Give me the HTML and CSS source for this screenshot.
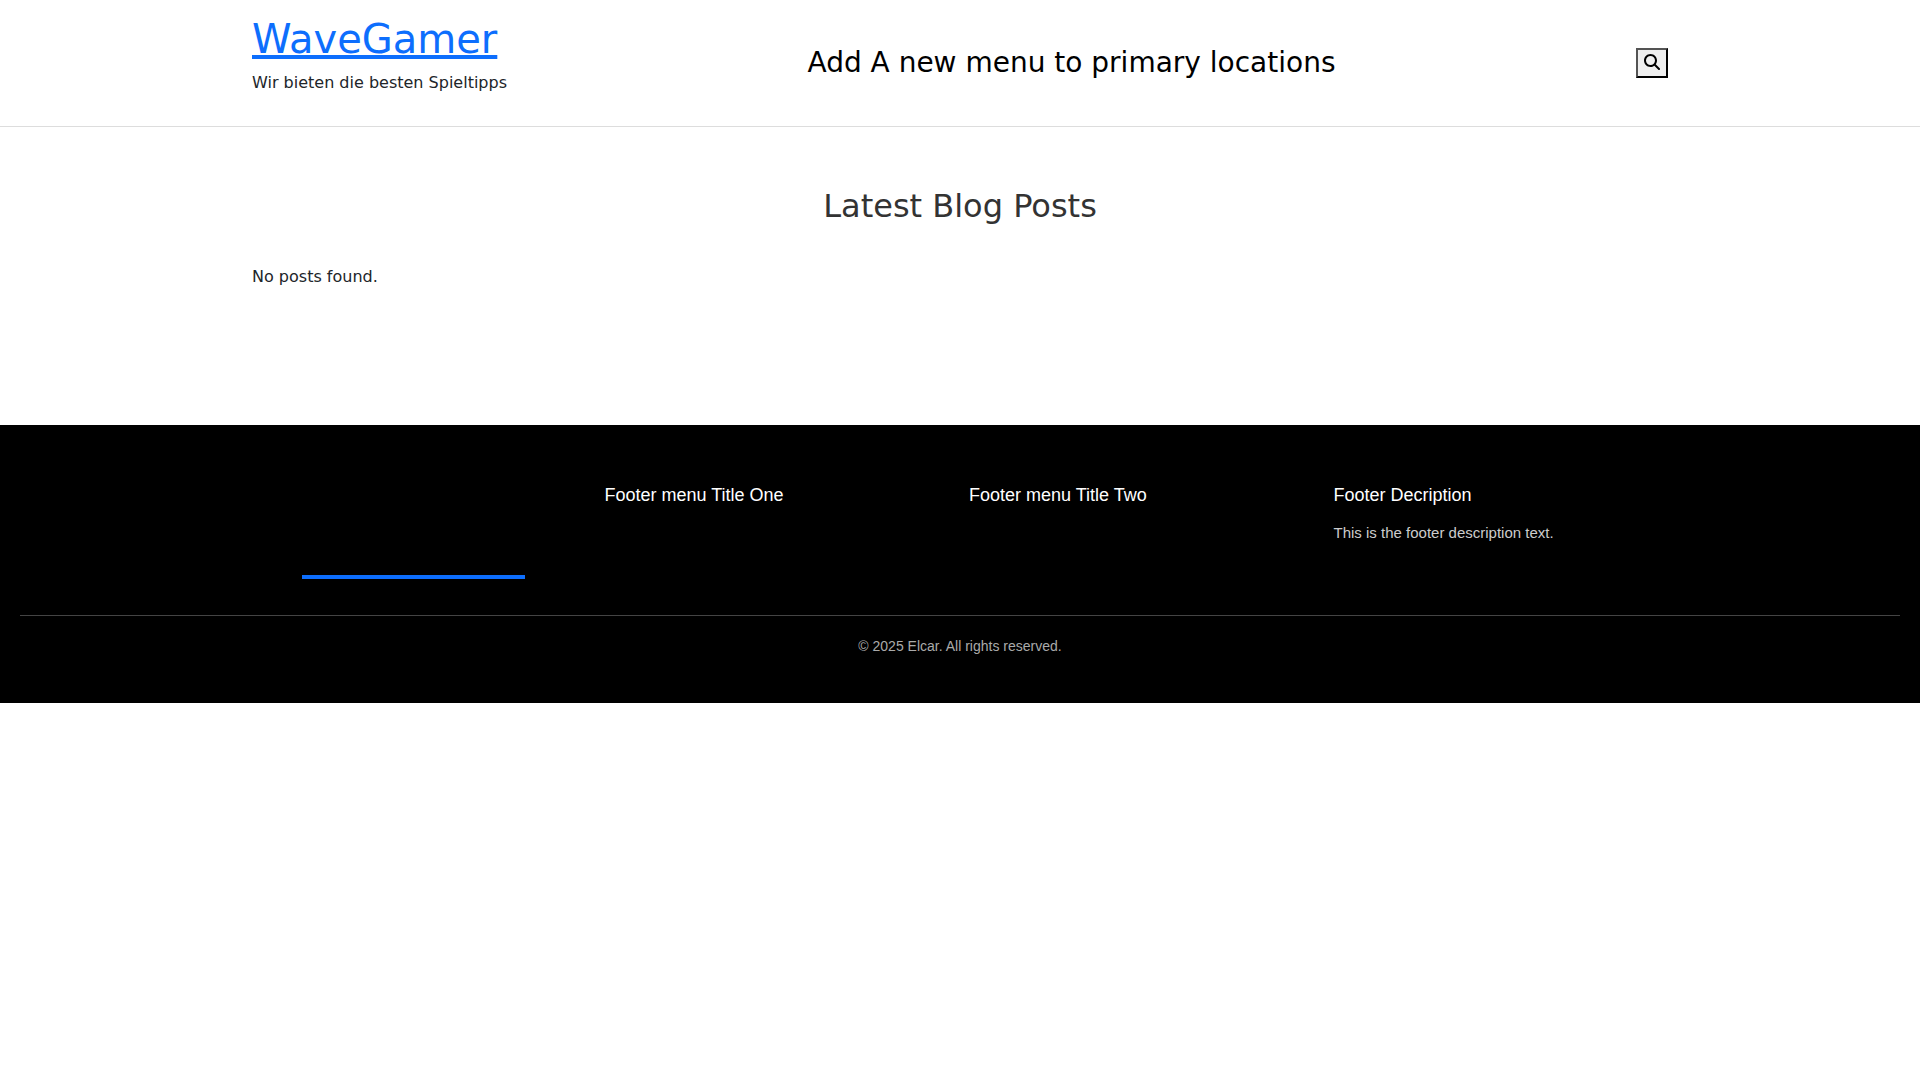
FILE: index.html
```html
<!DOCTYPE html>
<html lang="de">
<head>
    <meta charset="UTF-8">
    <meta name="viewport" content="width=device-width, initial-scale=1.0">
    <title>WaveGamer</title>
    <link rel="stylesheet" href="styles.css">
</head>
<body>
    <header class="site-header">
        <div class="container header-inner">
            <div class="site-logo">
                <h1><a href="#">WaveGamer</a></h1>
                <p>Wir bieten die besten Spieltipps</p>
            </div>
            <nav class="main-nav">
                <h3>Add A new menu to primary locations</h3>
            </nav>
            <button class="search-toggle" type="button" aria-label="Search">
                <svg viewBox="0 0 512 512" aria-hidden="true"><path d="M416 208c0 45.9-14.9 88.3-40 122.7L502.6 457.4c12.5 12.5 12.5 32.8 0 45.3s-32.8 12.5-45.3 0L330.7 376c-34.4 25.2-76.8 40-122.7 40C93.1 416 0 322.9 0 208S93.1 0 208 0S416 93.1 416 208zM208 352a144 144 0 1 0 0-288 144 144 0 1 0 0 288z"/></svg>
            </button>
        </div>
    </header>

    <main class="blog-section">
        <div class="container">
            <h2>Latest Blog Posts</h2>
            <p>No posts found.</p>
        </div>
    </main>

    <footer class="site-footer">
        <div class="footer-grid">
            <div class="footer-col">
                <a class="footer-logo" href="#" aria-label="WaveGamer"></a>
            </div>
            <div class="footer-col">
                <h4>Footer menu Title One</h4>
            </div>
            <div class="footer-col">
                <h4>Footer menu Title Two</h4>
            </div>
            <div class="footer-col">
                <h4>Footer Decription</h4>
                <p>This is the footer description text.</p>
            </div>
        </div>
        <div class="footer-bottom">
            <p>© 2025 Elcar. All rights reserved.</p>
        </div>
    </footer>
</body>
</html>
```
FILE: styles.css
```css
* {
    box-sizing: border-box;
}

body {
    margin: 0;
    background: #fff;
    color: #212529;
    font-family: "DejaVu Sans", sans-serif;
    font-size: 16px;
    line-height: 24px;
}

h1, h2, h3, h4, p {
    margin: 0;
    font-weight: 400;
}

.container {
    max-width: 1440px;
    margin: 0 auto;
    padding: 0 12px;
}

/* Header */
.site-header {
    padding: 15px 0;
    border-bottom: 1px solid #ddd;
}

.header-inner {
    display: flex;
    justify-content: space-between;
    align-items: center;
}

.site-logo h1 {
    margin-bottom: 8px;
    font-size: 40px;
    line-height: 48px;
}

.site-logo a {
    color: #0d6efd;
    text-decoration: underline;
}

.site-logo p {
    margin-bottom: 16px;
}

.main-nav h3 {
    color: #000;
    font-size: 28px;
    line-height: 34px;
}

.search-toggle {
    padding: 1px 6px;
    border: 2px outset #000;
    background: #efefef;
    color: #000;
    font-family: inherit;
    font-size: 16px;
    line-height: 24px;
    cursor: pointer;
}

.search-toggle svg {
    width: 16px;
    height: 16px;
    fill: currentColor;
    vertical-align: -2px;
}

/* Blog */
.blog-section {
    padding: 60px 0 136px;
}

.blog-section h2 {
    margin-bottom: 40px;
    color: #333;
    font-size: 32px;
    line-height: 38px;
    text-align: center;
}

/* Footer */
.site-footer {
    padding: 60px 20px 30px;
    background: #000;
    color: #fff;
    font-family: "Liberation Sans", Arial, sans-serif;
}

.footer-grid {
    display: grid;
    grid-template-columns: repeat(4, 1fr);
    gap: 18px;
    max-width: 1440px;
    margin: 0 auto 36px;
}

.footer-logo {
    display: block;
    width: 223px;
    height: 94px;
    margin: 0 auto;
    border-bottom: 4px solid #0d6efd;
}

.footer-col h4 {
    margin-bottom: 17px;
    font-size: 18px;
    line-height: 20px;
}

.footer-col p {
    color: #ccc;
    font-size: 15px;
    line-height: 22px;
}

.footer-bottom {
    padding-top: 20px;
    border-top: 1px solid #444;
    text-align: center;
}

.footer-bottom p {
    margin-bottom: 16px;
    color: #aaa;
    font-size: 14px;
    line-height: 21px;
}
```
